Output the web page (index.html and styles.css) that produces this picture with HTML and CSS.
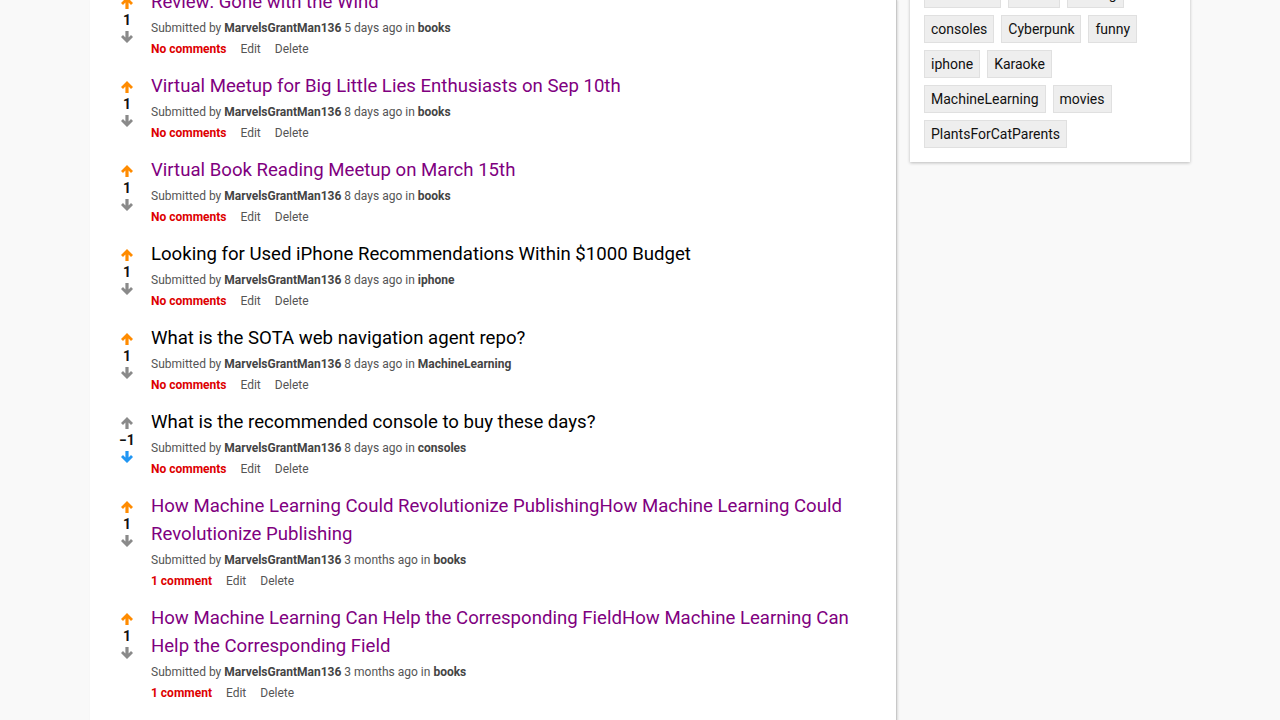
FILE: index.html
```html
<!DOCTYPE html>
<html lang="en">
<head>
<meta charset="utf-8">
<title>Forum</title>
<link rel="stylesheet" href="styles.css">
</head>
<body>
<div class="page">
  <main class="main">
    <div class="posts">
      <article class="post">
        <div class="vote">
          <svg class="arr up-on" viewBox="0 0 12 12"><path d="M6 0L12 6L10 8L7.6 5.6V12H4.4V5.6L2 8L0 6Z"/></svg>
          <span class="score">1</span>
          <svg class="arr" viewBox="0 0 12 12"><path d="M6 12L12 6L10 4L7.6 6.4V0H4.4V6.4L2 4L0 6Z"/></svg>
        </div>
        <div class="body">
          <a class="title visited" href="#">Review: Gone with the Wind</a>
          <div class="meta">Submitted by <b>MarvelsGrantMan136</b> 5 days ago in <b>books</b></div>
          <div class="actions"><a class="comments" href="#">No comments</a><a href="#">Edit</a><a href="#">Delete</a></div>
        </div>
      </article>
      <article class="post">
        <div class="vote">
          <svg class="arr up-on" viewBox="0 0 12 12"><path d="M6 0L12 6L10 8L7.6 5.6V12H4.4V5.6L2 8L0 6Z"/></svg>
          <span class="score">1</span>
          <svg class="arr" viewBox="0 0 12 12"><path d="M6 12L12 6L10 4L7.6 6.4V0H4.4V6.4L2 4L0 6Z"/></svg>
        </div>
        <div class="body">
          <a class="title visited" href="#">Virtual Meetup for Big Little Lies Enthusiasts on Sep 10th</a>
          <div class="meta">Submitted by <b>MarvelsGrantMan136</b> 8 days ago in <b>books</b></div>
          <div class="actions"><a class="comments" href="#">No comments</a><a href="#">Edit</a><a href="#">Delete</a></div>
        </div>
      </article>
      <article class="post">
        <div class="vote">
          <svg class="arr up-on" viewBox="0 0 12 12"><path d="M6 0L12 6L10 8L7.6 5.6V12H4.4V5.6L2 8L0 6Z"/></svg>
          <span class="score">1</span>
          <svg class="arr" viewBox="0 0 12 12"><path d="M6 12L12 6L10 4L7.6 6.4V0H4.4V6.4L2 4L0 6Z"/></svg>
        </div>
        <div class="body">
          <a class="title visited" href="#">Virtual Book Reading Meetup on March 15th</a>
          <div class="meta">Submitted by <b>MarvelsGrantMan136</b> 8 days ago in <b>books</b></div>
          <div class="actions"><a class="comments" href="#">No comments</a><a href="#">Edit</a><a href="#">Delete</a></div>
        </div>
      </article>
      <article class="post">
        <div class="vote">
          <svg class="arr up-on" viewBox="0 0 12 12"><path d="M6 0L12 6L10 8L7.6 5.6V12H4.4V5.6L2 8L0 6Z"/></svg>
          <span class="score">1</span>
          <svg class="arr" viewBox="0 0 12 12"><path d="M6 12L12 6L10 4L7.6 6.4V0H4.4V6.4L2 4L0 6Z"/></svg>
        </div>
        <div class="body">
          <a class="title" href="#">Looking for Used iPhone Recommendations Within $1000 Budget</a>
          <div class="meta">Submitted by <b>MarvelsGrantMan136</b> 8 days ago in <b>iphone</b></div>
          <div class="actions"><a class="comments" href="#">No comments</a><a href="#">Edit</a><a href="#">Delete</a></div>
        </div>
      </article>
      <article class="post">
        <div class="vote">
          <svg class="arr up-on" viewBox="0 0 12 12"><path d="M6 0L12 6L10 8L7.6 5.6V12H4.4V5.6L2 8L0 6Z"/></svg>
          <span class="score">1</span>
          <svg class="arr" viewBox="0 0 12 12"><path d="M6 12L12 6L10 4L7.6 6.4V0H4.4V6.4L2 4L0 6Z"/></svg>
        </div>
        <div class="body">
          <a class="title" href="#">What is the SOTA web navigation agent repo?</a>
          <div class="meta">Submitted by <b>MarvelsGrantMan136</b> 8 days ago in <b>MachineLearning</b></div>
          <div class="actions"><a class="comments" href="#">No comments</a><a href="#">Edit</a><a href="#">Delete</a></div>
        </div>
      </article>
      <article class="post">
        <div class="vote">
          <svg class="arr" viewBox="0 0 12 12"><path d="M6 0L12 6L10 8L7.6 5.6V12H4.4V5.6L2 8L0 6Z"/></svg>
          <span class="score">&minus;1</span>
          <svg class="arr down-on" viewBox="0 0 12 12"><path d="M6 12L12 6L10 4L7.6 6.4V0H4.4V6.4L2 4L0 6Z"/></svg>
        </div>
        <div class="body">
          <a class="title" href="#">What is the recommended console to buy these days?</a>
          <div class="meta">Submitted by <b>MarvelsGrantMan136</b> 8 days ago in <b>consoles</b></div>
          <div class="actions"><a class="comments" href="#">No comments</a><a href="#">Edit</a><a href="#">Delete</a></div>
        </div>
      </article>
      <article class="post">
        <div class="vote">
          <svg class="arr up-on" viewBox="0 0 12 12"><path d="M6 0L12 6L10 8L7.6 5.6V12H4.4V5.6L2 8L0 6Z"/></svg>
          <span class="score">1</span>
          <svg class="arr" viewBox="0 0 12 12"><path d="M6 12L12 6L10 4L7.6 6.4V0H4.4V6.4L2 4L0 6Z"/></svg>
        </div>
        <div class="body">
          <a class="title visited" href="#">How Machine Learning Could Revolutionize PublishingHow Machine Learning Could Revolutionize Publishing</a>
          <div class="meta">Submitted by <b>MarvelsGrantMan136</b> 3 months ago in <b>books</b></div>
          <div class="actions"><a class="comments" href="#">1 comment</a><a href="#">Edit</a><a href="#">Delete</a></div>
        </div>
      </article>
      <article class="post">
        <div class="vote">
          <svg class="arr up-on" viewBox="0 0 12 12"><path d="M6 0L12 6L10 8L7.6 5.6V12H4.4V5.6L2 8L0 6Z"/></svg>
          <span class="score">1</span>
          <svg class="arr" viewBox="0 0 12 12"><path d="M6 12L12 6L10 4L7.6 6.4V0H4.4V6.4L2 4L0 6Z"/></svg>
        </div>
        <div class="body">
          <a class="title visited" href="#">How Machine Learning Can Help the Corresponding FieldHow Machine Learning Can Help the Corresponding Field</a>
          <div class="meta">Submitted by <b>MarvelsGrantMan136</b> 3 months ago in <b>books</b></div>
          <div class="actions"><a class="comments" href="#">1 comment</a><a href="#">Edit</a><a href="#">Delete</a></div>
        </div>
      </article>
    </div>
  </main>
  <aside class="sidebar">
    <section class="box">
      <ul class="tags">
        <li>AskReddit</li>
        <li>books</li>
        <li>coding</li>
        <li>consoles</li>
        <li>Cyberpunk</li>
        <li>funny</li>
        <li>iphone</li>
        <li>Karaoke</li>
        <li>MachineLearning</li>
        <li>movies</li>
        <li>PlantsForCatParents</li>
      </ul>
    </section>
  </aside>
</div>
</body>
</html>
```
FILE: styles.css
```css
html, body {
  margin: 0;
  padding: 0;
  background: #f9f9f9;
  font-family: Roboto, "Liberation Sans", sans-serif;
  height: 720px;
  overflow: hidden;
}

.page {
  display: flex;
  align-items: flex-start;
  padding-left: 90px;
}

.main {
  width: 806px;
  height: 760px;
  background: #fff;
  border-right: 1px solid #c8c8c8;
  box-shadow: 1px 0 2px rgba(0, 0, 0, 0.12);
  flex-shrink: 0;
}

.posts {
  margin-top: -18px;
  padding-left: 20px;
}

.post {
  display: flex;
  gap: 7px;
  padding: 6px 0 7px;
}

.vote {
  width: 34px;
  padding-top: 9px;
  display: flex;
  flex-direction: column;
  align-items: center;
  flex-shrink: 0;
}

.arr {
  width: 12px;
  height: 12px;
  fill: #8a8a8a;
  display: block;
}

.arr.up-on { fill: #ff8b00; }
.arr.down-on { fill: #2196f3; }

.score {
  font-size: 14px;
  font-weight: 700;
  line-height: 22px;
  color: #111;
}

.body {
  flex: 1;
  min-width: 0;
  padding-right: 40px;
}

.title {
  display: block;
  font-size: 18.6px;
  line-height: 28px;
  color: #000;
  text-decoration: none;
}

.title.visited { color: #800080; }

.meta {
  font-size: 12px;
  line-height: 22px;
  color: #555;
  margin-top: 1px;
}

.meta b { color: #444; font-weight: 700; }

.actions {
  font-size: 12px;
  line-height: 20px;
  display: flex;
  gap: 14px;
}

.actions a {
  color: #555;
  text-decoration: none;
}

.actions a.comments {
  color: #d00;
  font-weight: 700;
}

.sidebar {
  width: 280px;
  margin-left: 13px;
  flex-shrink: 0;
}

.box {
  background: #fff;
  margin-top: -34px;
  padding: 14px 14px 14px;
  box-shadow: 0 1px 3px rgba(0, 0, 0, 0.25);
}

.tags {
  list-style: none;
  margin: 0;
  padding: 0;
  display: flex;
  flex-wrap: wrap;
  gap: 7px 7px;
}

.tags li {
  background: #eee;
  border: 1px solid #e0e0e0;
  font-size: 14px;
  line-height: 26px;
  padding: 0 6px;
  color: #111;
}
```
